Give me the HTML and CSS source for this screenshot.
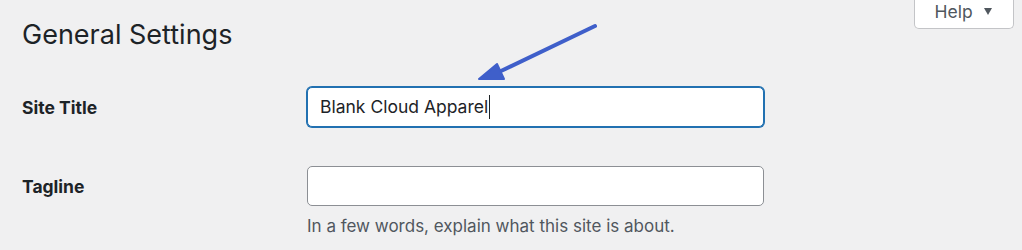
FILE: index.html
```html
<!DOCTYPE html>
<html lang="en">
<head>
<meta charset="utf-8">
<title>General Settings</title>
<link rel="stylesheet" href="styles.css">
</head>
<body>
<div class="wrap">
  <div class="help-tab">Help <span class="tri"></span></div>
  <h1 class="page-title">General Settings</h1>
  <div class="form">
    <div class="row">
      <div class="label">Site Title</div>
      <div class="field">
        <div class="input focused"><span class="val">Blank Cloud Apparel</span><span class="caret"></span></div>
      </div>
    </div>
    <div class="row">
      <div class="label">Tagline</div>
      <div class="field">
        <div class="input"></div>
        <p class="description">In a few words, explain what this site is about.</p>
      </div>
    </div>
  </div>
  <svg class="arrow" width="140" height="70" viewBox="0 0 140 70">
    <line x1="130" y1="11" x2="36" y2="56" stroke="#3f5fca" stroke-width="4" stroke-linecap="round"/>
    <polygon points="14,64 32,49 39,64" fill="#3f5fca" stroke="#3f5fca" stroke-width="2" stroke-linejoin="round"/>
  </svg>
</div>
</body>
</html>
```

FILE: styles.css
```css
html, body {
  margin: 0;
  padding: 0;
  background: #f0f0f1;
}
body {
  font-family: Inter, "Noto Sans", "Liberation Sans", sans-serif;
  color: #1d2327;
}
.wrap {
  position: relative;
  width: 1022px;
  height: 250px;
  padding-left: 22px;
  box-sizing: border-box;
  overflow: hidden;
}
.help-tab {
  position: absolute;
  top: 0;
  left: 914px;
  width: 100px;
  height: 29px;
  box-sizing: border-box;
  background: #fff;
  border: 1px solid #c3c4c7;
  border-top: none;
  border-radius: 0 0 5px 5px;
  color: #50575e;
  font-size: 17.5px;
  line-height: 24px;
  text-align: center;
  padding-right: 2px;
}
.tri {
  display: inline-block;
  width: 0;
  height: 0;
  border-left: 4.5px solid transparent;
  border-right: 4.5px solid transparent;
  border-top: 7px solid #50575e;
  margin-left: 6px;
  vertical-align: 3px;
}
.page-title {
  margin: 0;
  padding-top: 17px;
  font-size: 27px;
  line-height: 36px;
  font-weight: 400;
  color: #1d2327;
}
.form {
  margin-top: 34px;
  display: flex;
  flex-direction: column;
  gap: 38px;
}
.row {
  display: grid;
  grid-template-columns: 285px 457px;
  align-items: start;
}
.label {
  font-size: 17.5px;
  font-weight: 700;
  line-height: 40px;
  padding-top: 1px;
}
.field {
  display: flex;
  flex-direction: column;
}
.input {
  height: 40px;
  box-sizing: border-box;
  background: #fff;
  border: 1px solid #8c8f94;
  border-radius: 5px;
  padding: 0 12px;
  font-size: 17.5px;
  line-height: 38px;
  display: flex;
  align-items: center;
}
.input.focused {
  border-color: #2271b1;
  box-shadow: 0 0 0 1px #2271b1;
}
.caret {
  display: inline-block;
  width: 1px;
  height: 24px;
  background: #1d2327;
  margin-left: 1px;
}
.description {
  margin: 8px 0 0;
  font-size: 17px;
  line-height: 24px;
  color: #50575e;
}
.arrow {
  position: absolute;
  left: 465px;
  top: 15px;
}
```
